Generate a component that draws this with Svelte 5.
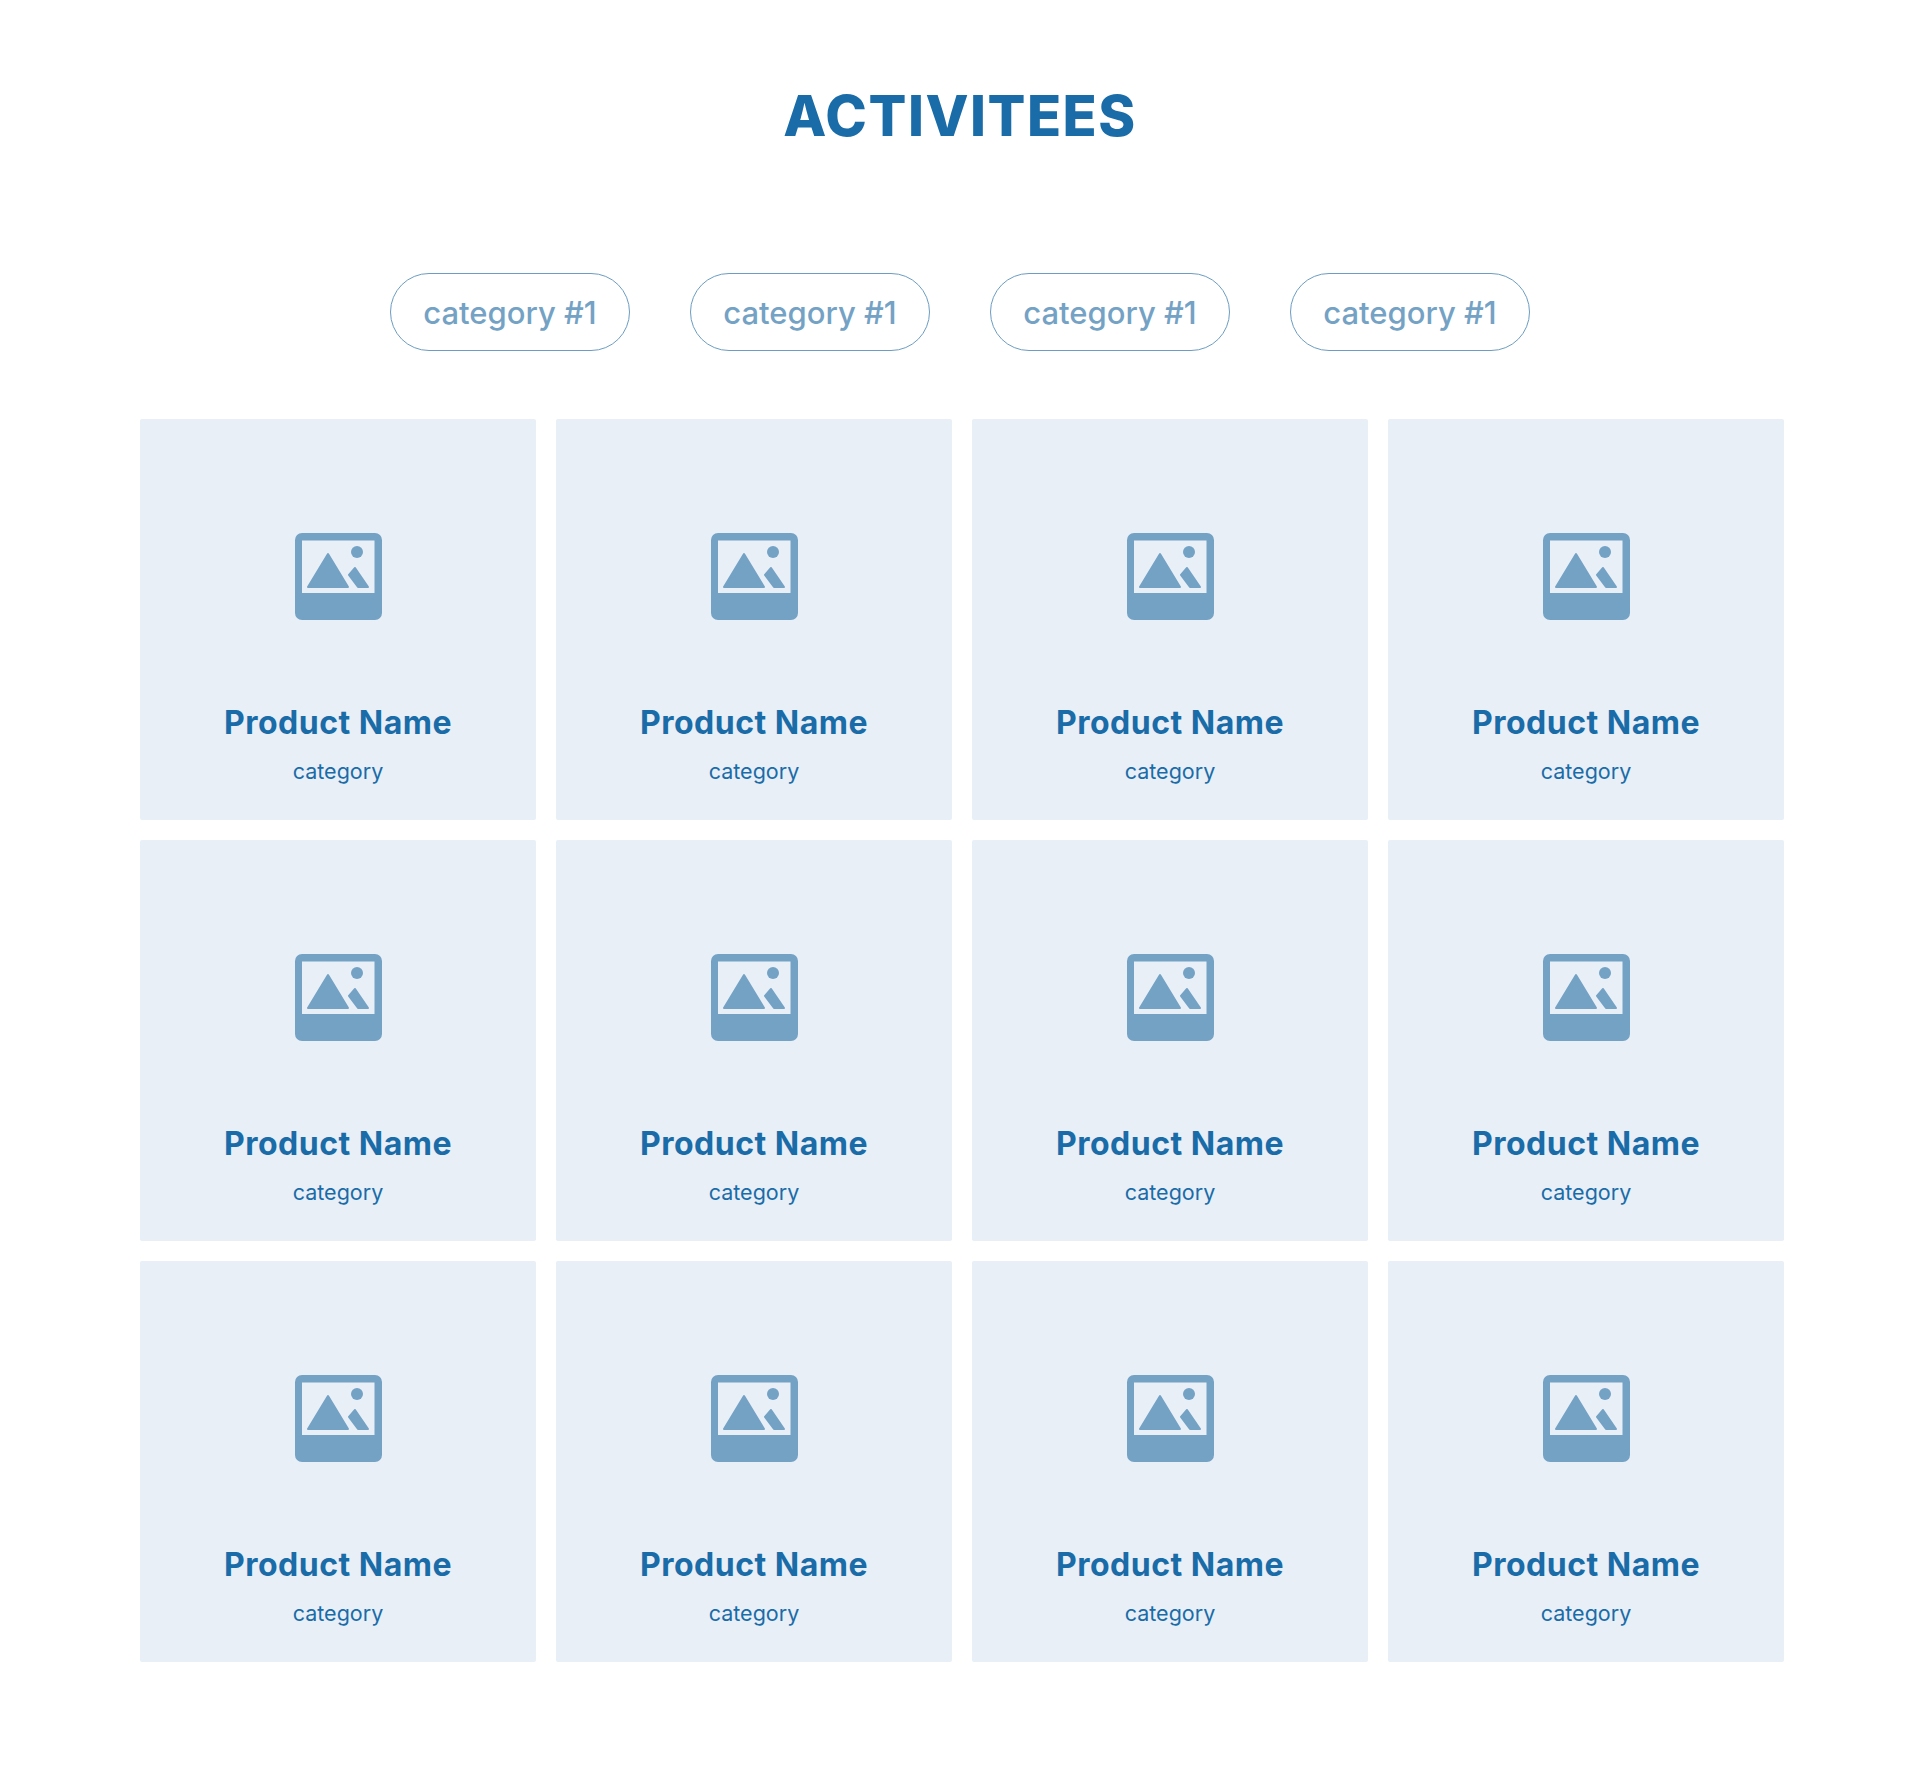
<script>
	const categories = ['category #1', 'category #1', 'category #1', 'category #1'];
	const products = Array.from({ length: 12 }, () => ({ name: 'Product Name', category: 'category' }));
</script>

<main class="page">
	<h1>ACTIVITEES</h1>

	<div class="filters">
		{#each categories as label}
			<button class="pill">{label}</button>
		{/each}
	</div>

	<div class="grid">
		{#each products as product}
			<div class="card">
				<svg class="icon" viewBox="0 0 87 87" aria-hidden="true">
					<path
						fill-rule="evenodd"
						d="M7 0h73a7 7 0 0 1 7 7v73a7 7 0 0 1-7 7H7a7 7 0 0 1-7-7V7a7 7 0 0 1 7-7zM7 7.500v52.500h72.500V7.500z"
					/>
					<circle cx="62" cy="19" r="6" />
					<path class="peak" d="M33 21 L53 54 H13 Z" />
					<path class="peak" d="M54 42 L60 35 L73 54 H63 Z" />
				</svg>
				<div class="name">{product.name}</div>
				<div class="category">{product.category}</div>
			</div>
		{/each}
	</div>
</main>

<style>
	:global(body) {
		margin: 0;
		background: #fff;
	}

	.page {
		height: 1778px;
		font-family: Inter, 'Liberation Sans', sans-serif;
		color: #1a6ca8;
	}

	h1 {
		margin: 0;
		padding-top: 78px;
		font-size: 56px;
		line-height: 76px;
		font-weight: 800;
		letter-spacing: 1.5px;
		text-align: center;
	}

	.filters {
		display: flex;
		justify-content: center;
		gap: 60px;
		margin-top: 119px;
	}

	.pill {
		width: 240px;
		height: 78px;
		padding: 0;
		border: 1px solid #6c9dc2;
		border-radius: 39px;
		background: #fff;
		color: #74a2c5;
		font-family: inherit;
		font-size: 31px;
		font-weight: 500;
	}

	.grid {
		display: grid;
		grid-template-columns: repeat(4, 396px);
		grid-auto-rows: 401px;
		gap: 20px;
		margin: 68px 0 0 140px;
	}

	.card {
		display: flex;
		flex-direction: column;
		align-items: center;
		padding-top: 114px;
		box-sizing: border-box;
		background: #e8eff7;
		border-radius: 2px;
	}

	.icon {
		width: 87px;
		height: 87px;
		fill: #74a2c5;
	}

	.peak {
		stroke: #74a2c5;
		stroke-width: 2;
		stroke-linejoin: round;
	}

	.name {
		margin-top: 83px;
		font-size: 32px;
		line-height: 40px;
		font-weight: 700;
		letter-spacing: 0.5px;
	}

	.category {
		margin-top: 12px;
		font-size: 21.5px;
		line-height: 32px;
	}
</style>
